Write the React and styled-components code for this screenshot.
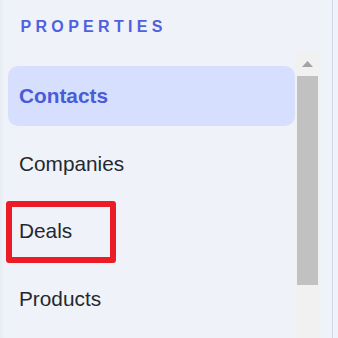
import React from 'react';
import styled, { createGlobalStyle } from 'styled-components';

const GlobalStyle = createGlobalStyle`
  html, body {
    margin: 0;
    padding: 0;
    background-color: #eff3f9;
    font-family: 'Liberation Sans', Arial, sans-serif;
  }
`;

const Page = styled.div`
  width: 338px;
  height: 338px;
  overflow: hidden;
  display: flex;
  background-color: #eff3f9;
`;

const Sidebar = styled.aside`
  width: 333px;
  height: 100%;
  box-sizing: border-box;
  border-right: 1px solid #d3d9e4;
  box-shadow: inset 4px 0 5px -4px rgba(40, 60, 100, 0.08);
  display: flex;
  flex-direction: column;
  padding-top: 17px;
`;

const SectionTitle = styled.h2`
  margin: 0 0 14px;
  padding-left: 20.5px;
  font-size: 16px;
  line-height: 20px;
  font-weight: 700;
  letter-spacing: 0.27em;
  color: #4f61e0;
`;

const ScrollArea = styled.div`
  flex: 1;
  min-height: 0;
  display: flex;
  margin-right: 12px;
`;

const List = styled.nav`
  flex: 1;
  min-width: 0;
  overflow: hidden;
  display: flex;
  flex-direction: column;
  gap: 7.5px;
  padding: 15px 0 0 8px;
`;

const Item = styled.div`
  position: relative;
  flex-shrink: 0;
  height: 60px;
  display: flex;
  align-items: center;
  padding-left: 11px;
  border-radius: 10px;
  font-size: 20.8px;
  font-weight: ${(props) => (props.active ? 700 : 400)};
  color: ${(props) => (props.active ? '#4a5bd8' : '#25282f')};
  background-color: ${(props) => (props.active ? '#d6dffe' : 'transparent')};
`;

// red annotation frame drawn over an item
const Highlight = styled.span`
  position: absolute;
  left: -2.3px;
  top: 0;
  width: 110.6px;
  height: 62px;
  box-sizing: border-box;
  border: 6px solid #ec1c26;
  border-radius: 3px;
  pointer-events: none;
`;

const Scrollbar = styled.div`
  width: 25px;
  flex-shrink: 0;
  background-color: #f1f1f1;
  display: flex;
  flex-direction: column;
`;

const ArrowButton = styled.div`
  height: 25px;
  display: flex;
  align-items: center;
  justify-content: center;
`;

const Thumb = styled.div`
  height: 209px;
  margin: 0 2px;
  background-color: #c1c1c1;
`;

const items = [
  { label: 'Contacts', active: true },
  { label: 'Companies' },
  { label: 'Deals', marked: true },
  { label: 'Products' },
];

const App = () => {
  return (
    <Page>
      <GlobalStyle />
      <Sidebar>
        <SectionTitle>PROPERTIES</SectionTitle>
        <ScrollArea>
          <List>
            {items.map((item) => (
              <Item key={item.label} active={item.active}>
                {item.label}
                {item.marked && <Highlight />}
              </Item>
            ))}
          </List>
          <Scrollbar>
            <ArrowButton>
              <svg width="11" height="6" viewBox="0 0 11 6">
                <path d="M5.5 0 L11 6 L0 6 Z" fill="#a3a3a3" />
              </svg>
            </ArrowButton>
            <Thumb />
          </Scrollbar>
        </ScrollArea>
      </Sidebar>
    </Page>
  );
};

export default App;
